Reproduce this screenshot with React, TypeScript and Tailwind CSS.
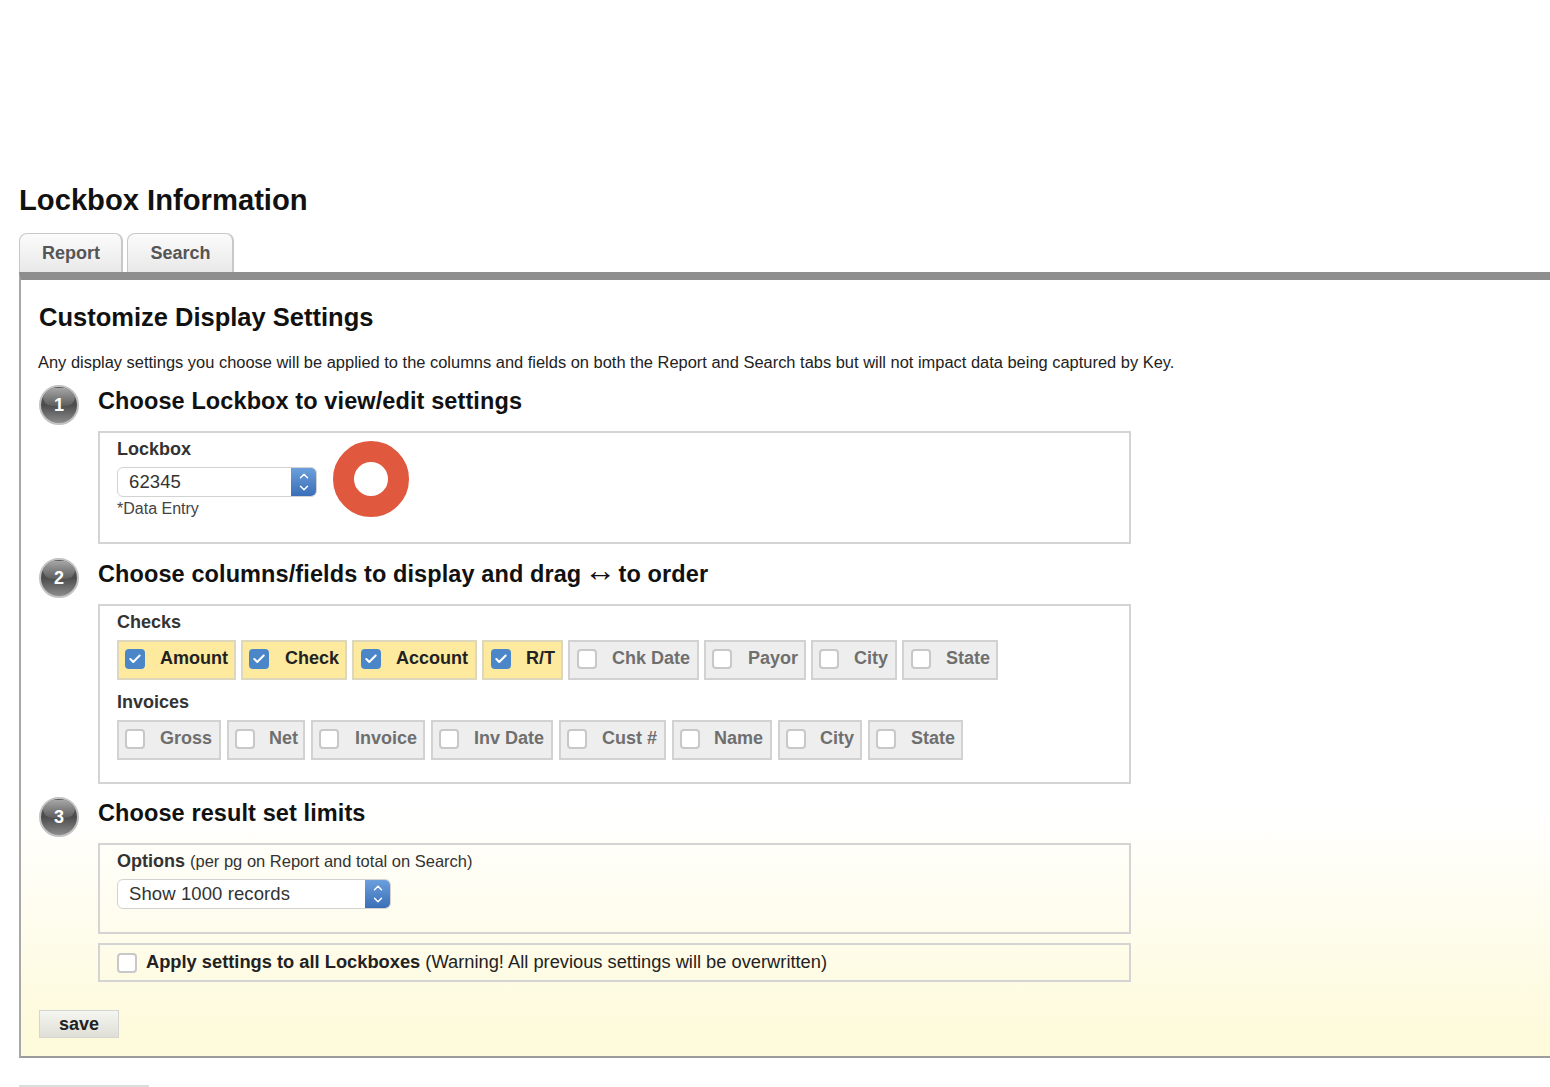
import React from 'react';
import { ChevronUp, ChevronDown, Check } from 'lucide-react';

const checkFields = [
  { label: 'Amount', on: true, w: 'w-[119px]', pl: 'pl-[6px]', gap: 'gap-[15px]' },
  { label: 'Check', on: true, w: 'w-[106px]', pl: 'pl-[6px]', gap: 'gap-[16px]' },
  { label: 'Account', on: true, w: 'w-[125px]', pl: 'pl-[7px]', gap: 'gap-[15px]' },
  { label: 'R/T', on: true, w: 'w-[81px]', pl: 'pl-[7px]', gap: 'gap-[15px]' },
  { label: 'Chk Date', on: false, w: 'w-[131px]', pl: 'pl-[7px]', gap: 'gap-[15px]' },
  { label: 'Payor', on: false, w: 'w-[102px]', pl: 'pl-[6px]', gap: 'gap-[16px]' },
  { label: 'City', on: false, w: 'w-[86px]', pl: 'pl-[6px]', gap: 'gap-[15px]' },
  { label: 'State', on: false, w: 'w-[96px]', pl: 'pl-[7px]', gap: 'gap-[15px]' },
];

const invoiceFields = [
  { label: 'Gross', on: false, w: 'w-[104px]', pl: 'pl-[6px]', gap: 'gap-[15px]' },
  { label: 'Net', on: false, w: 'w-[78px]', pl: 'pl-[6px]', gap: 'gap-[14px]' },
  { label: 'Invoice', on: false, w: 'w-[114px]', pl: 'pl-[6px]', gap: 'gap-[16px]' },
  { label: 'Inv Date', on: false, w: 'w-[122px]', pl: 'pl-[6px]', gap: 'gap-[15px]' },
  { label: 'Cust #', on: false, w: 'w-[107px]', pl: 'pl-[6px]', gap: 'gap-[15px]' },
  { label: 'Name', on: false, w: 'w-[100px]', pl: 'pl-[6px]', gap: 'gap-[14px]' },
  { label: 'City', on: false, w: 'w-[84px]', pl: 'pl-[6px]', gap: 'gap-[14px]' },
  { label: 'State', on: false, w: 'w-[95px]', pl: 'pl-[6px]', gap: 'gap-[15px]' },
];

const StepBadge: React.FC<{ n: number }> = ({ n }) => (
  <div className="relative -mt-[1px] w-[40px] h-[40px] shrink-0 rounded-full border-2 border-[#c2c2c2] bg-[linear-gradient(to_bottom,#5c5c5c,#4c4c4c_50%,#8c8c8c_100%)] flex items-center justify-center overflow-hidden">
    <div className="absolute top-[1px] left-[2px] right-[2px] h-[18px] rounded-full bg-gradient-to-b from-[#a6a6a6] to-[#5e5e5e]" />
    <span className="relative text-[18px] font-bold text-white leading-none">{n}</span>
  </div>
);

const BlueSelect: React.FC<{ value: string; w: string }> = ({ value, w }) => (
  <div className={`${w} h-[30px] flex rounded-[6px] border border-[#d2d2d2] bg-white overflow-hidden`}>
    <span className="flex-1 pl-[11px] text-[18.5px] tracking-[0.1px] leading-[28px] text-[#333]">{value}</span>
    <div className="w-[25px] flex flex-col items-center justify-center bg-gradient-to-b from-[#6c9fdc] to-[#3a6fb8] text-white">
      <ChevronUp size={14} strokeWidth={2.5} className="-mb-[1px]" />
      <ChevronDown size={14} strokeWidth={2.5} className="-mt-[1px]" />
    </div>
  </div>
);

const Box: React.FC<{ checked: boolean }> = ({ checked }) =>
  checked ? (
    <span className="w-[20px] h-[20px] shrink-0 rounded-[4px] bg-[#4a86c8] flex items-center justify-center text-white">
      <Check size={14} strokeWidth={3.5} />
    </span>
  ) : (
    <span className="w-[20px] h-[20px] shrink-0 rounded-[4px] bg-white border-2 border-[#c8c8c8]" />
  );

type Field = { label: string; on: boolean; w: string; pl: string; gap: string };

const FieldChip: React.FC<Field> = ({ label, on, w, pl, gap }) => (
  <div
    className={`${w} ${pl} ${gap} h-[40px] flex items-center pb-[3px] border-2 text-[18px] font-bold whitespace-nowrap ${
      on ? 'bg-[#fdea9f] border-[#dcd7bd] text-[#222]' : 'bg-[#eeeeee] border-[#d2d2d2] text-[#6f6f6f]'
    }`}
  >
    <Box checked={on} />
    {label}
  </div>
);

const StepTitle: React.FC<{ children: React.ReactNode }> = ({ children }) => (
  <h3 className="text-[23.5px] font-bold leading-[30px] text-[#111] tracking-[0.1px] whitespace-nowrap">{children}</h3>
);

const Section: React.FC<{ n: number; title: React.ReactNode; children: React.ReactNode }> = ({ n, title, children }) => (
  <div className="flex gap-[19px]">
    <StepBadge n={n} />
    <div className="w-[1033px]">
      <StepTitle>{title}</StepTitle>
      {children}
    </div>
  </div>
);

export default function App() {
  return (
    <div className="w-[1550px] h-[1087px] overflow-hidden bg-white font-['Liberation_Sans',Arial,sans-serif] text-[#222]">
      <div className="pl-[19px] pt-[182px]">
        <h1 className="text-[29.2px] font-bold leading-[36px] text-[#111]">Lockbox Information</h1>

        <div className="flex gap-[4px] mt-[15px] h-[39px]">
          <div className="w-[104px] pl-[1px] rounded-t-[8px] border-t border-l border-r-2 border-[#c8c8c8] bg-gradient-to-b from-[#fbfbfb] to-[#e9e9e9] flex items-center justify-center text-[18px] font-bold text-[#555]">
            Report
          </div>
          <div className="w-[107px] pl-[1px] rounded-t-[8px] border-t border-l border-r-2 border-[#c8c8c8] bg-gradient-to-b from-[#fbfbfb] to-[#e9e9e9] flex items-center justify-center text-[18px] font-bold text-[#555]">
            Search
          </div>
        </div>

        <div className="h-[786px] border-t-[8px] border-t-[#8e8e8e] border-l-2 border-l-[#a8a8a8] border-b-2 border-b-[#9c9c9c] bg-[linear-gradient(to_bottom,#ffffff_0%,#ffffff_68%,#fefadc_97%,#fefadc_100%)] pl-[18px] pt-[20px]">
          <h2 className="text-[25.5px] font-bold leading-[34px] text-[#111]">Customize Display Settings</h2>
          <p className="mt-[16px] text-[16.45px] leading-[24px] text-[#222] whitespace-nowrap -ml-[1px]">
            Any display settings you choose will be applied to the columns and fields on both the Report and Search tabs but will not impact data being captured by Key.
          </p>

          <div className="mt-[12px]">
            <Section n={1} title="Choose Lockbox to view/edit settings">
              <div className="mt-[15px] h-[113px] border-2 border-[#d4d4d4] pl-[17px] pt-[4px]">
                <div className="text-[18px] font-bold leading-[24px] text-[#333]">Lockbox</div>
                <div className="flex items-start">
                  <div className="mt-[6px]">
                    <BlueSelect value="62345" w="w-[200px]" />
                    <div className="text-[16px] leading-[22px] mt-[1px] text-[#444]">*Data Entry</div>
                  </div>
                  {/* red ring marker */}
                  <div className="ml-[16px] -mt-[20px] w-[76px] h-[76px] rounded-full border-[21px] border-[#e0583e] bg-white" />
                </div>
              </div>
            </Section>
          </div>

          <div className="mt-[15px]">
            <Section
              n={2}
              title={
                <>
                  Choose columns/fields to display and drag <span className="text-[32px] leading-[0] font-normal tracking-normal relative -top-[1px] -ml-[4px] -mr-[4px]">↔</span> to order
                </>
              }
            >
              <div className="mt-[15px] h-[180px] border-2 border-[#d4d4d4] pl-[17px] pt-[4px]">
                <div className="text-[18px] font-bold leading-[24px] text-[#333]">Checks</div>
                <div className="flex gap-[5px] mt-[6px]">
                  {checkFields.map(f => (
                    <FieldChip key={f.label} {...f} />
                  ))}
                </div>
                <div className="text-[18px] font-bold leading-[24px] text-[#333] mt-[10px]">Invoices</div>
                <div className="flex gap-[6px] mt-[6px]">
                  {invoiceFields.map(f => (
                    <FieldChip key={f.label} {...f} />
                  ))}
                </div>
              </div>
            </Section>
          </div>

          <div className="mt-[14px]">
            <Section n={3} title="Choose result set limits">
              <div className="mt-[15px] h-[91px] border-2 border-[#d4d4d4] pl-[17px] pt-[4px]">
                <div className="text-[18px] leading-[24px] text-[#333]">
                  <span className="font-bold">Options</span> <span className="text-[16.5px]">(per pg on Report and total on Search)</span>
                </div>
                <div className="mt-[6px]">
                  <BlueSelect value="Show 1000 records" w="w-[274px]" />
                </div>
              </div>
              <div className="mt-[9px] h-[39px] border-2 border-[#d4d4d4] pl-[17px] flex items-center gap-[9px] text-[18.3px] text-[#222]">
                <Box checked={false} />
                <span className="pb-[2px]">
                  <span className="font-bold">Apply settings to all Lockboxes</span> (Warning! All previous settings will be overwritten)
                </span>
              </div>
            </Section>
          </div>

          <button className="mt-[28px] w-[80px] h-[28px] border border-[#d4d4d4] bg-gradient-to-b from-[#f6f6f0] to-[#dfdfd8] text-[18px] font-bold text-[#222] leading-none">
            save
          </button>
        </div>

        <div className="mt-[27px] w-[130px] h-[2px] bg-[#dddddd]" />
      </div>
    </div>
  );
}
